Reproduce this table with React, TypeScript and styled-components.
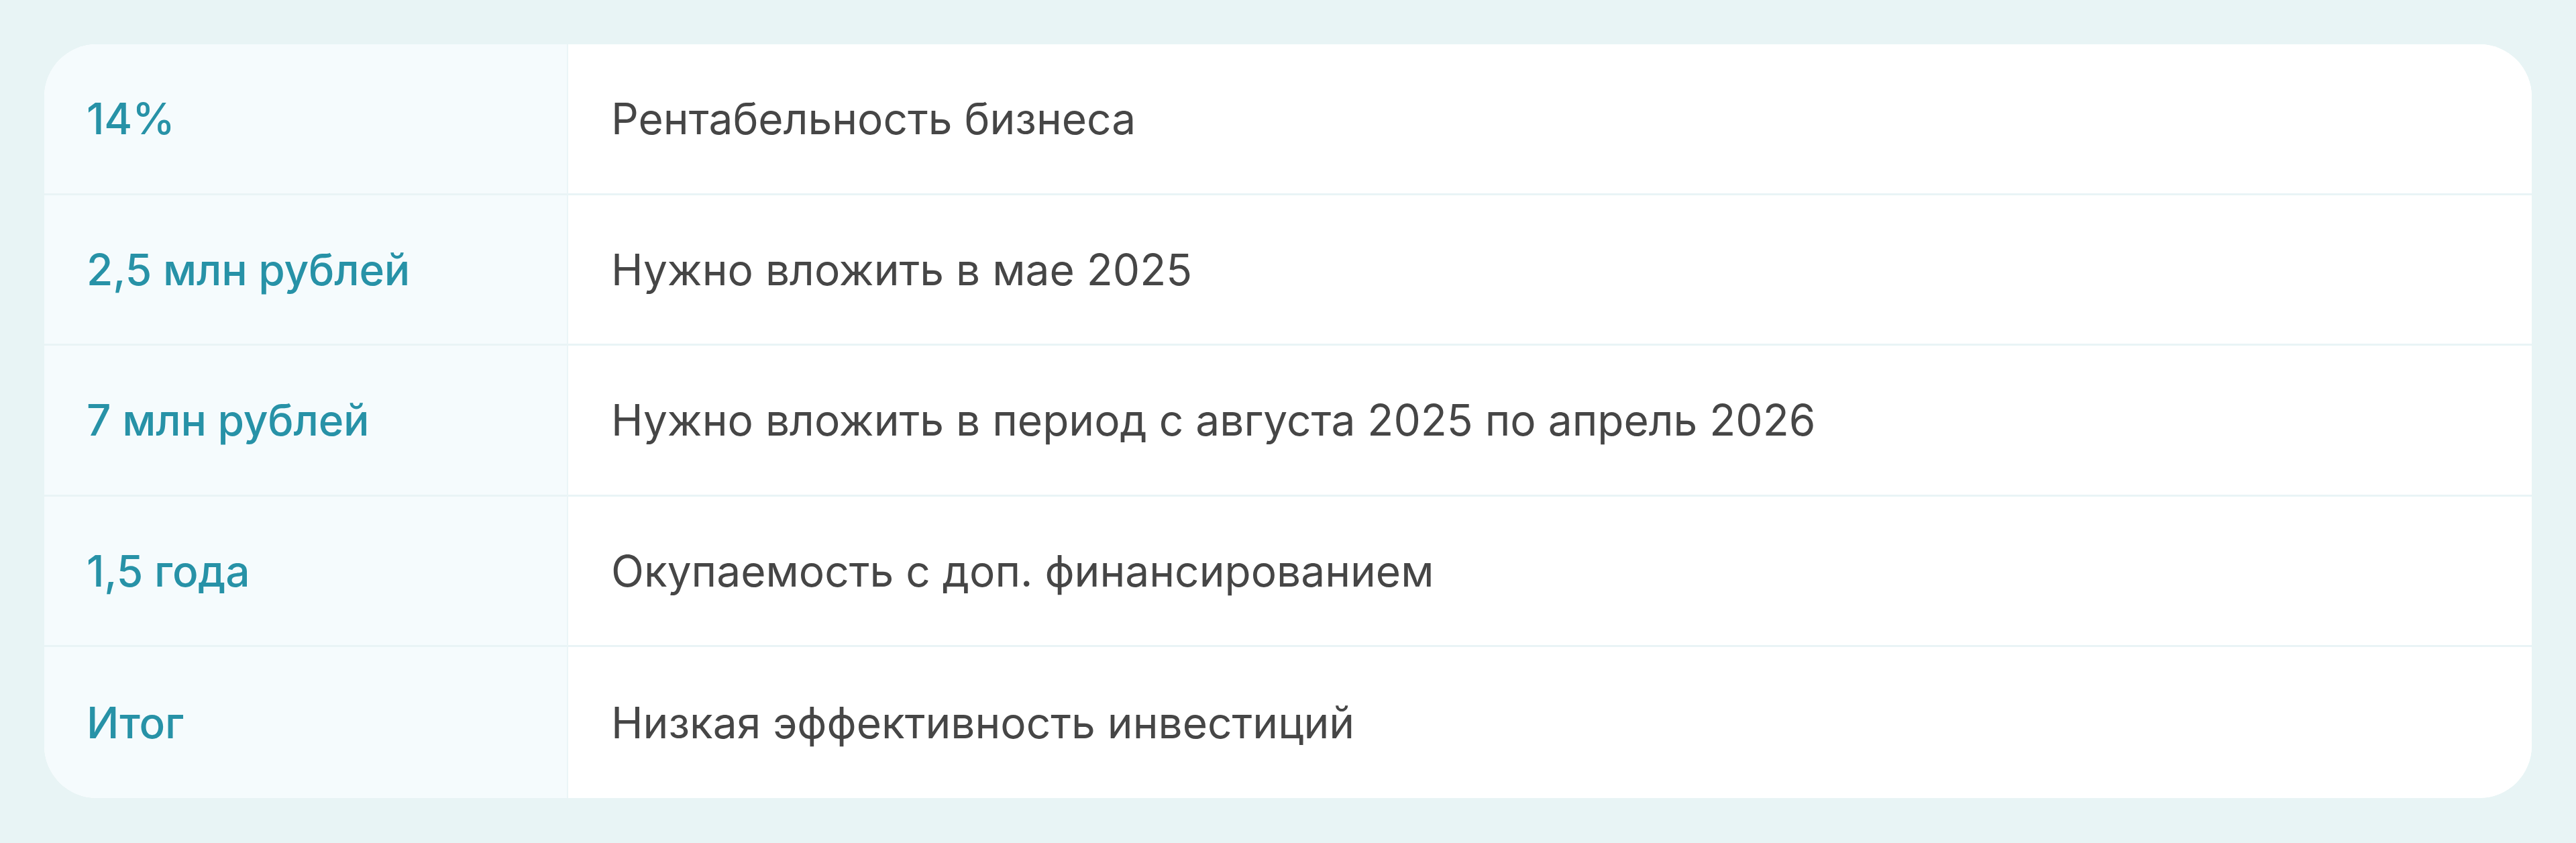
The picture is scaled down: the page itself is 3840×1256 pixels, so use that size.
import React from "react";
import styled, { createGlobalStyle } from "styled-components";

const Global = createGlobalStyle`
  html, body { margin: 0; padding: 0; background: #e8f4f5; }
  body { font-family: Inter, "Noto Sans", sans-serif; }
`;

const Page = styled.div`
  box-sizing: border-box;
  width: 3840px;
  height: 1256px;
  padding: 66px;
  background: #e8f4f5;
`;

const Card = styled.div`
  display: grid;
  grid-template-columns: 781px 1fr;
  grid-auto-rows: 1fr;
  height: 1123px;
  border-radius: 78px;
  overflow: hidden;
  background: #ffffff;
`;

const Cell = styled.div<{ $key?: boolean; $last?: boolean }>`
  display: flex;
  align-items: center;
  padding-left: ${(p) => (p.$key ? "63px" : "64px")};
  background: ${(p) => (p.$key ? "#f5fbfd" : "#ffffff")};
  border-right: ${(p) => (p.$key ? "2px solid #ebf5f7" : "none")};
  border-bottom: ${(p) => (p.$last ? "none" : "3px solid #e9f4f6")};
  font-size: 64px;
  font-weight: ${(p) => (p.$key ? 500 : 400)};
  color: ${(p) => (p.$key ? "#2792a7" : "#464646")};
  letter-spacing: ${(p) => (p.$key ? "-0.2px" : "0px")};
`;

const rows: [string, string][] = [
  ["14%", "Рентабельность бизнеса"],
  ["2,5 млн рублей", "Нужно вложить в мае 2025"],
  ["7 млн рублей", "Нужно вложить в период с августа 2025 по апрель 2026"],
  ["1,5 года", "Окупаемость с доп. финансированием"],
  ["Итог", "Низкая эффективность инвестиций"],
];

export default function App() {
  return (
    <>
      <Global />
      <Page>
        <Card>
          {rows.map(([k, v], i) => (
            <React.Fragment key={k}>
              <Cell $key $last={i === rows.length - 1}>{k}</Cell>
              <Cell $last={i === rows.length - 1}>{v}</Cell>
            </React.Fragment>
          ))}
        </Card>
      </Page>
    </>
  );
}
